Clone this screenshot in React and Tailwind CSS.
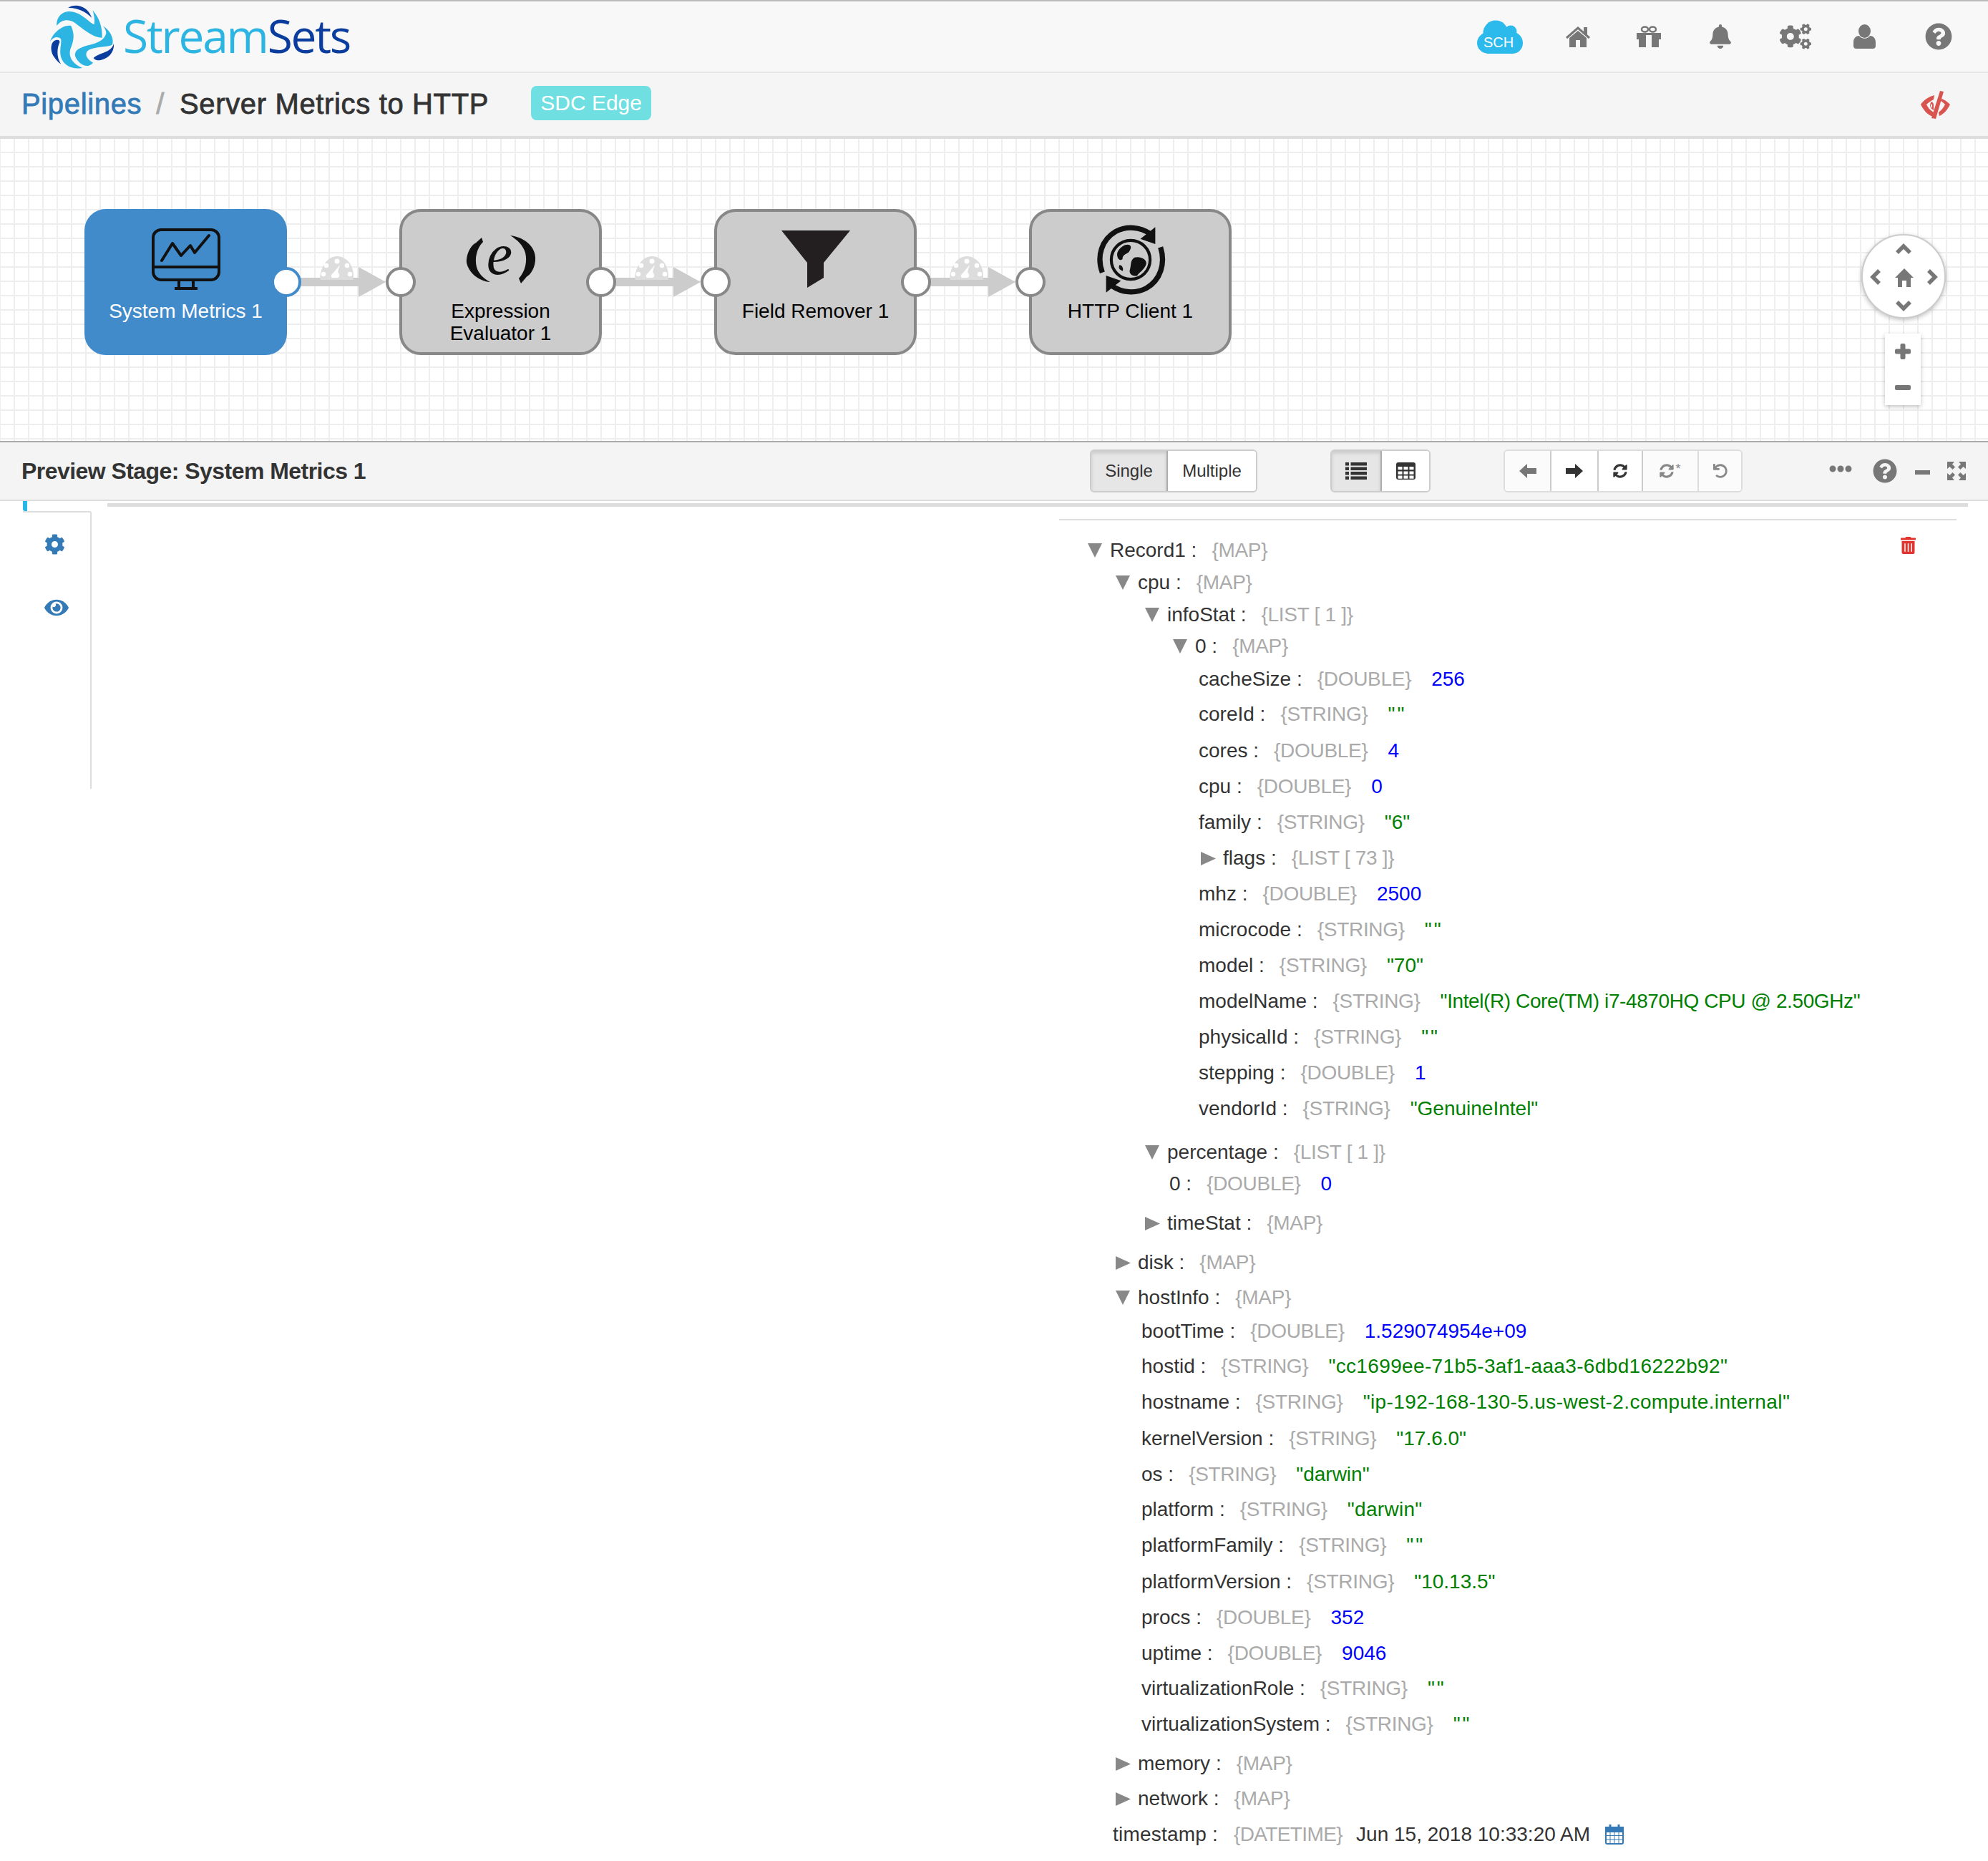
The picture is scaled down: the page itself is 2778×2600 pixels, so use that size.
import React from 'react';
import { FaBell, FaCogs, FaQuestionCircle, FaSyncAlt, FaUndo, FaEllipsisH, FaCog, FaEye, FaTrashAlt } from 'react-icons/fa';

const Logo = () => (
  <svg viewBox="0 0 330 300" className="w-[110px] h-[100px] shrink-0">
    <path fill="#0b3d9e" d="M105 30C130 12 185 15 205 72C180 45 140 28 105 30Z" />
    <path fill="#2cb5e2" d="M58 105C55 70 80 45 110 45C160 45 190 90 215 100C218 80 215 60 208 40C235 70 250 110 248 155C210 155 170 120 130 90C105 75 75 80 58 105Z" />
    <path fill="#2cb5e2" d="M30 172C40 135 85 98 118 105C128 130 135 155 118 195C105 225 115 260 165 282C120 290 85 270 75 235C68 205 80 175 75 160C60 145 40 155 30 172Z" />
    <path fill="#0b3d9e" d="M55 165C30 170 28 215 50 240C60 255 70 262 75 265C55 235 60 195 70 175C72 168 65 162 55 165Z" />
    <path fill="#2cb5e2" d="M250 105C285 125 300 165 290 185C270 195 230 190 195 205C175 215 175 240 210 260C190 282 165 275 145 250C125 225 135 205 165 195C200 180 255 180 265 135C265 125 258 112 250 105Z" />
    <path fill="#0b3d9e" d="M212 240C240 215 285 220 297 180C300 215 275 245 235 250C225 250 215 247 212 240Z" />
  </svg>
);

const Cloud = () => (
  <svg viewBox="0 0 64 47" className="w-[64px] h-[47px]">
    <g fill="#2cb9ec">
      <circle cx="26" cy="18" r="17.5" />
      <circle cx="47" cy="16" r="8.500" />
      <ellipse cx="50" cy="32" rx="14" ry="15" />
      <ellipse cx="16" cy="32" rx="16" ry="15" />
      <rect x="14" y="22" width="36" height="25" />
    </g>
    <text x="30" y="38" textAnchor="middle" fontSize="20" fill="#fff" fontFamily="Liberation Sans, sans-serif">SCH</text>
  </svg>
);

const HomeIcon = () => (
  <svg viewBox="0 0 34 29" className="w-[34px] h-[29px]" fill="#777">
    <rect x="25" y="1" width="5" height="10" />
    <path d="M1 16L17 2L33 16" fill="none" stroke="#777" strokeWidth="3" />
    <path d="M5 16L17 6L29 16V29H20V19H14V29H5Z" />
  </svg>
);

const GiftIcon = () => (
  <svg viewBox="0 0 34 30" className="w-[34px] h-[30px] ml-[65px]">
    <ellipse cx="11.500" cy="5" rx="4.500" ry="3.500" fill="none" stroke="#777" strokeWidth="2.500" />
    <ellipse cx="22.500" cy="5" rx="4.500" ry="3.500" fill="none" stroke="#777" strokeWidth="2.500" />
    <path fill="#777" d="M0 10H13V30H3V19H0ZM34 10H21V30H31V19H34Z" />
    <path fill="#777" d="M13 10H21V13H13Z" />
  </svg>
);

const UserIcon = () => (
  <svg viewBox="0 0 31 34" className="w-[31px] h-[34px] ml-[59px]" fill="#777">
    <ellipse cx="15.500" cy="9.500" rx="8.500" ry="9.500" />
    <path d="M0 30V25C0 19 4 16 8 16C11 21 20 21 23 16C27 16 31 19 31 25V30C31 33 29 34 27 34H4C2 34 0 33 0 30Z" />
  </svg>
);

const RedEye = () => (
  <svg viewBox="0 0 42 39" className="w-[42px] h-[39px]">
    <path fill="#d9534f" d="M20 6C12 8 5 13 1 19C5 27 10 33 18 36L19 30C14 27 11 23 9 19C12 16 15 14 19 12Z" />
    <path fill="#d9534f" d="M16 15C20 17 19 20 19 27C15 25 12 20 16 15Z" />
    <path fill="#fff" d="M16 18C17 20 17 21 17 24C15 22 14 20 16 18Z" />
    <path fill="#d9534f" d="M30 11C36 13 39 16 42 19C39 25 34 32 27 35L26 30C30 27 33 23 35 19C33 17 31 15 29 14Z" />
    <path fill="#d9534f" d="M28 0L33 1L22 39L16 38Z" />
  </svg>
);

const Connector = () => (
  <svg viewBox="0 0 160 60" className="absolute left-[calc(100%+5px)] top-[62px] w-[160px] h-[60px] pointer-events-none">
    <rect x="0" y="30" width="100" height="12" fill="#ccc" />
    <path d="M99 15L137 36L99 57Z" fill="#ccc" />
    <path d="M46 33C44 30 46 18 52 10C56 4 62 0 69 0C76 0 83 4 87 10C92 18 93 28 91 33Z" fill="#ddd" />
    <g fill="#fff">
      <circle cx="69" cy="7" r="3.500" />
      <circle cx="54" cy="13" r="3.200" />
      <circle cx="83" cy="13" r="3.200" />
      <circle cx="50" cy="25" r="3.200" />
      <circle cx="87" cy="25" r="3.200" />
      <path d="M73 12L70 22C73 25 73 29 70 30H62C60 28 61 25 64 23Z" />
    </g>
  </svg>
);

const Port = ({ side, blue }) => (
  <span className={`absolute top-[77px] w-[42px] h-[42px] rounded-full bg-white border-4 z-10 ${blue ? 'border-[#428bca]' : 'border-[#888888]'} ${side === 'left' ? 'left-[-23px]' : 'right-[-24px]'}`} />
);

const MonitorIcon = () => (
  <svg viewBox="0 0 96 86" className="w-[96px] h-[86px]" fill="none" stroke="#111" strokeWidth="4">
    <rect x="2" y="2" width="92" height="70" rx="11" />
    <path d="M2 54H94" />
    <path d="M14 45L29 21L41 38L54 24L60 34L80 10" strokeLinecap="round" strokeLinejoin="round" />
    <path d="M38 72V83M58 72V83M32 84H64" />
  </svg>
);

const ExprIcon = () => (
  <svg viewBox="0 0 98 68" className="w-[98px] h-[68px] overflow-visible">
    <path fill="#111" d="M22 3L24 9C15 18 12 32 15 44C17 52 24 60 34 65C18 64 4 52 1 38C0 28 6 14 14 10L10 14Z" />
    <path fill="#111" d="M62 0C80 2 96 14 97 30C98 44 90 56 84 58L88 54L77 67L74 60C83 50 86 36 83 24C80 14 72 6 62 0Z" />
    <text x="47" y="54" textAnchor="middle" fontSize="82" fontStyle="italic" fontFamily="Liberation Serif, serif" fill="#111">e</text>
  </svg>
);

const FunnelIcon = () => (
  <svg viewBox="0 0 96 80" className="w-[96px] h-[80px]">
    <path fill="#231f20" d="M0 0H96L59 45V66L36 80V45Z" />
  </svg>
);

const GlobeIcon = () => (
  <svg viewBox="0 0 94 94" className="w-[98px] h-[98px]" fill="none" stroke="#111">
    <path strokeWidth="7" d="M9 64C1 42 8 20 27 9C42 1 60 3 73 12" />
    <path fill="#111" stroke="none" d="M80 3L80 26L60 19Z" />
    <path strokeWidth="7" d="M87 30C94 52 87 74 68 85C53 93 35 91 22 82" />
    <path fill="#111" stroke="none" d="M14 91L14 68L34 75Z" />
    <circle cx="47" cy="47" r="26" strokeWidth="4" />
    <path fill="#111" stroke="none" d="M36 29C44 24 50 28 46 34C44 40 36 38 36 46C32 50 28 44 29 38C30 34 33 31 36 29ZM52 44C60 42 68 46 68 52C66 60 58 64 56 68C50 70 44 66 46 60C48 54 46 48 52 44ZM32 54C36 54 38 60 36 62C32 60 30 58 32 54Z" />
  </svg>
);

const nodes = [
  { label: ['System Metrics 1'], icon: <MonitorIcon />, iconCls: 'pt-[23px]', blue: true, inPort: false, outPort: true },
  { label: ['Expression', 'Evaluator 1'], icon: <ExprIcon />, iconCls: 'pt-[33px]', inPort: true, outPort: true },
  { label: ['Field Remover 1'], icon: <FunnelIcon />, iconCls: 'pt-[26px]', inPort: true, outPort: true },
  { label: ['HTTP Client 1'], icon: <GlobeIcon />, iconCls: 'pt-[18px]', inPort: true, outPort: false },
];

const Node = ({ n }) => (
  <div className={`relative w-[283px] h-[204px] rounded-[30px] border-4 ${n.blue ? 'bg-[#428bca] border-[#428bca] text-white' : 'bg-[#cccccc] border-[#888888] text-black'}`}>
    {n.inPort && <Port side="left" />}
    {n.outPort && <Port side="right" blue={n.blue} />}
    {n.outPort && <Connector />}
    <div className={`h-[122px] flex justify-center items-start ${n.iconCls}`}>{n.icon}</div>
    <div className="text-center text-[28px] leading-[31px] mt-[1px]">
      {n.label.map((l) => <div key={l}>{l}</div>)}
    </div>
  </div>
);

const Tri = ({ open }) => open
  ? <svg viewBox="0 0 20 20" className="w-[20px] h-[20px] shrink-0 mr-[11px]"><path d="M0 0H20L10 20Z" fill="#888" /></svg>
  : <svg viewBox="0 0 21 19" className="w-[21px] h-[19px] shrink-0 mr-[10px]"><path d="M0 0L21 9.500L0 19Z" fill="#888" /></svg>;

// [row classes, arrow (o/c/null), label, type, value, value classes]
const B = 'text-[#0000ff]';
const G = 'text-[#008000]';
const E = 'text-[#008000] tracking-[3px]';
const rows = [
  ['mt-0 pl-[40px]', 'o', 'Record1', '{MAP}'],
  ['mt-[5px] pl-[79px]', 'o', 'cpu', '{MAP}'],
  ['mt-[5px] pl-[120px]', 'o', 'infoStat', '{LIST [ 1 ]}'],
  ['mt-[4px] pl-[159px]', 'o', '0', '{MAP}'],
  ['mt-[6px] pl-[195px]', null, 'cacheSize', '{DOUBLE}', '256', B],
  ['mt-[9px] pl-[195px]', null, 'coreId', '{STRING}', '""', E],
  ['mt-[11px] pl-[195px]', null, 'cores', '{DOUBLE}', '4', B],
  ['mt-[10px] pl-[195px]', null, 'cpu', '{DOUBLE}', '0', B],
  ['mt-[10px] pl-[195px]', null, 'family', '{STRING}', '"6"', G],
  ['mt-[10px] pl-[198px]', 'c', 'flags', '{LIST [ 73 ]}'],
  ['mt-[10px] pl-[195px]', null, 'mhz', '{DOUBLE}', '2500', B],
  ['mt-[10px] pl-[195px]', null, 'microcode', '{STRING}', '""', E],
  ['mt-[10px] pl-[195px]', null, 'model', '{STRING}', '"70"', G],
  ['mt-[10px] pl-[195px]', null, 'modelName', '{STRING}', '"Intel(R) Core(TM) i7-4870HQ CPU @ 2.50GHz"', 'text-[#008000] tracking-[-0.4px]'],
  ['mt-[10px] pl-[195px]', null, 'physicalId', '{STRING}', '""', E],
  ['mt-[10px] pl-[195px]', null, 'stepping', '{DOUBLE}', '1', B],
  ['mt-[10px] pl-[195px]', null, 'vendorId', '{STRING}', '"GenuineIntel"', G],
  ['mt-[21px] pl-[120px]', 'o', 'percentage', '{LIST [ 1 ]}'],
  ['mt-[4px] pl-[154px]', null, '0', '{DOUBLE}', '0', B],
  ['mt-[15px] pl-[120px]', 'c', 'timeStat', '{MAP}'],
  ['mt-[15px] pl-[79px]', 'c', 'disk', '{MAP}'],
  ['mt-[9px] pl-[79px]', 'o', 'hostInfo', '{MAP}'],
  ['mt-[7px] pl-[115px]', null, 'bootTime', '{DOUBLE}', '1.529074954e+09', B],
  ['mt-[9px] pl-[115px]', null, 'hostid', '{STRING}', '"cc1699ee-71b5-3af1-aaa3-6dbd16222b92"', 'text-[#008000] tracking-[0.35px]'],
  ['mt-[10px] pl-[115px]', null, 'hostname', '{STRING}', '"ip-192-168-130-5.us-west-2.compute.internal"', 'text-[#008000] tracking-[0.4px]'],
  ['mt-[11px] pl-[115px]', null, 'kernelVersion', '{STRING}', '"17.6.0"', G],
  ['mt-[10px] pl-[115px]', null, 'os', '{STRING}', '"darwin"', G],
  ['mt-[9px] pl-[115px]', null, 'platform', '{STRING}', '"darwin"', 'text-[#008000] tracking-[0.3px]'],
  ['mt-[10px] pl-[115px]', null, 'platformFamily', '{STRING}', '""', E],
  ['mt-[11px] pl-[115px]', null, 'platformVersion', '{STRING}', '"10.13.5"', G],
  ['mt-[10px] pl-[115px]', null, 'procs', '{DOUBLE}', '352', B],
  ['mt-[10px] pl-[115px]', null, 'uptime', '{DOUBLE}', '9046', B],
  ['mt-[9px] pl-[115px]', null, 'virtualizationRole', '{STRING}', '""', E],
  ['mt-[10px] pl-[115px]', null, 'virtualizationSystem', '{STRING}', '""', E],
  ['mt-[15px] pl-[79px]', 'c', 'memory', '{MAP}'],
  ['mt-[9px] pl-[79px]', 'c', 'network', '{MAP}'],
];

const Row = ({ r }) => (
  <div className={`flex items-center h-[40px] text-[28px] whitespace-nowrap ${r[0]}`}>
    {r[1] && <Tri open={r[1] === 'o'} />}
    <span className="text-[#333333]">{r[2]} :</span>
    <span className="ml-[21px] text-[#aaaaaa] tracking-[-0.3px]">{r[3]}</span>
    {r[4] && <span className={`ml-[28px] ${r[5]}`}>{r[4]}</span>}
  </div>
);

const CalendarIcon = () => (
  <svg viewBox="0 0 26 28" className="w-[26px] h-[28px] ml-[21px]" fill="none" stroke="#337ab7">
    <rect x="1" y="4" width="24" height="23" rx="2" strokeWidth="2" />
    <rect x="1" y="4" width="24" height="6" fill="#337ab7" strokeWidth="2" />
    <path d="M7 0V7M19 0V7" strokeWidth="3" />
    <path d="M7 10V27M13 10V27M19 10V27M1 15.500H25M1 21H25" strokeWidth="1" />
  </svg>
);

const BtnCell = ({ cls, children }) => (
  <div className={`flex items-center justify-center h-full ${cls}`}>{children}</div>
);

const Chevron = ({ d, cls }) => (
  <svg viewBox="0 0 22 22" className={`absolute w-[22px] h-[22px] ${cls}`}>
    <path d={d} fill="none" stroke="#777" strokeWidth="5.500" />
  </svg>
);

const ListIcon = () => (
  <svg viewBox="0 0 30 24" className="w-[30px] h-[24px]" fill="#333">
    {[0, 6.5, 13, 19.5].map((y) => (
      <g key={y}>
        <rect x="0" y={y} width="5" height="4.500" />
        <rect x="7.500" y={y} width="22.500" height="4.500" />
      </g>
    ))}
  </svg>
);

const TableIcon = () => (
  <svg viewBox="0 0 27 24" className="w-[27px] h-[24px]">
    <rect width="27" height="24" rx="3" fill="#333" />
    <g fill="#fff">
      {[6, 12.5, 18.500].map((y) => [2.500, 10.500, 18.500].map((x) => (
        <rect key={`${x}-${y}`} x={x} y={y} width="6" height="4.200" />
      )))}
    </g>
  </svg>
);

const ArrowIcon = ({ dir, color }) => (
  <svg viewBox="0 0 24 20" className={`w-[24px] h-[20px] ${dir === 'r' ? 'rotate-180' : ''}`}>
    <path d="M11 0L0 10L11 20V14H24V6H11Z" fill={color} />
  </svg>
);

const ExpandIcon = () => (
  <svg viewBox="0 0 28 28" className="ml-[23px] w-[28px] h-[28px]" fill="#777">
    <path d="M1 1H11L8 4.500L12 8.500L8.500 12L4.500 8L1 11Z" />
    <path d="M27 1H17L20 4.500L16 8.500L19.500 12L23.500 8L27 11Z" />
    <path d="M1 27H11L8 23.500L12 19.500L8.500 16L4.500 20L1 17Z" />
    <path d="M27 27H17L20 23.500L16 19.500L19.500 16L23.500 20L27 17Z" />
  </svg>
);

export default function App() {
  return (
    <div className="relative w-[2778px] h-[2600px] bg-white overflow-hidden font-['Liberation_Sans',Arial,sans-serif]">
      {/* top nav */}
      <div className="h-[102px] border-t-2 border-b-2 border-t-[#bbbbbb] border-b-[#e7e7e7] bg-[#f8f8f8] flex items-center justify-between">
        <div className="flex items-center ml-[60px]">
          <Logo />
          <div className="ml-[2px] text-[64px] leading-none font-['Open_Sans',sans-serif] tracking-[-2.200px] mt-[-3px]">
            <span className="text-[#2cb5e2]">Stream</span><span className="text-[#0b3d9e]">Sets</span>
          </div>
        </div>
        <div className="flex items-center pr-[50px] text-[#777777]">
          <Cloud />
          <div className="ml-[60px]"><HomeIcon /></div>
          <GiftIcon />
          <FaBell className="ml-[68px] w-[30px] h-[34px]" />
          <FaCogs className="ml-[68px] w-[44px] h-[38px]" />
          <UserIcon />
          <FaQuestionCircle className="ml-[69px] w-[38px] h-[38px]" />
        </div>
      </div>

      {/* breadcrumb */}
      <div className="h-[92px] border-b-4 border-[#dddddd] bg-[#f5f5f5] flex items-center justify-between pl-[30px] pr-[53px]">
        <div className="flex items-center text-[40px] leading-none tracking-[0.65px] mt-[-2px] [-webkit-text-stroke:0.8px]">
          <span className="text-[#337ab7]">Pipelines</span>
          <span className="ml-[20px] text-[#aaaaaa]">/</span>
          <span className="ml-[21px] text-[#333333]">Server Metrics to HTTP</span>
          <span className="ml-[59px] w-[168px] h-[48px] rounded-[8px] bg-[#6fdfe1] text-white text-[30px] flex items-center justify-center mt-[-2px] tracking-normal [-webkit-text-stroke:0px]">SDC Edge</span>
        </div>
        <RedEye />
      </div>

      {/* canvas */}
      <div className="relative h-[422px] pt-[98px] pl-[118px] bg-white bg-[linear-gradient(#eeeeee_2px,transparent_2px),linear-gradient(90deg,#eeeeee_2px,transparent_2px)] bg-[size:20px_20px] bg-[position:-1px_-2px]">
        <div className="flex gap-[157px]">
          {nodes.map((n) => <Node key={n.label[0]} n={n} />)}
        </div>
        <div className="absolute left-[2601px] top-[133px] w-[118px] h-[118px] rounded-full bg-white border-2 border-[#cccccc] shadow-[0_2px_6px_rgba(0,0,0,0.25)]">
          <Chevron d="M2 16L11 7L20 16" cls="left-[46px] top-[8px]" />
          <Chevron d="M2 6L11 15L20 6" cls="left-[46px] top-[87px]" />
          <Chevron d="M16 2L7 11L16 20" cls="left-[7px] top-[47px]" />
          <Chevron d="M6 2L15 11L6 20" cls="left-[86px] top-[47px]" />
          <svg viewBox="0 0 26 26" className="absolute left-[45px] top-[46px] w-[26px] h-[26px]">
            <path fill="#777" d="M13 0L26 13H22V26H16V17H10V26H4V13H0Z" />
          </svg>
        </div>
        <div className="absolute left-[2634px] top-[272px] w-[50px] h-[100px] bg-white shadow-[0_2px_6px_rgba(0,0,0,0.25)] flex flex-col items-center">
          <svg viewBox="0 0 22 22" className="mt-[14px] w-[22px] h-[22px]" fill="#777">
            <rect x="0" y="7.500" width="22" height="7" rx="2" />
            <rect x="7.500" y="0" width="7" height="22" rx="2" />
          </svg>
          <svg viewBox="0 0 22 7" className="mt-[36px] w-[22px] h-[7px]" fill="#777">
            <rect width="22" height="7" rx="2" />
          </svg>
        </div>
      </div>

      {/* preview header */}
      <div className="h-[84px] border-t-2 border-b-2 border-t-[#aaaaaa] border-b-[#dddddd] bg-[#f4f4f4] flex items-center">
        <div className="w-[1493px] ml-[30px] text-[32px] font-bold text-[#333333] tracking-[-0.55px]">Preview Stage: System Metrics 1</div>
        <div className="w-[234px] h-[60px] flex border-2 border-[#cccccc] rounded-[6px] text-[24px] text-[#333333] overflow-hidden">
          <BtnCell cls="w-[107px] bg-[#e6e6e6] border-r-2 border-[#adadad] shadow-[inset_0_3px_5px_rgba(0,0,0,0.125)]">Single</BtnCell>
          <BtnCell cls="flex-1 bg-white">Multiple</BtnCell>
        </div>
        <div className="ml-[102px] w-[140px] h-[60px] flex border-2 border-[#cccccc] rounded-[6px] overflow-hidden">
          <BtnCell cls="w-[70px] bg-[#e6e6e6] border-r-2 border-[#adadad] shadow-[inset_0_3px_5px_rgba(0,0,0,0.125)]"><ListIcon /></BtnCell>
          <BtnCell cls="flex-1 bg-white"><TableIcon /></BtnCell>
        </div>
        <div className="ml-[102px] w-[334px] h-[60px] flex border-2 border-[#dddddd] rounded-[6px] bg-white overflow-hidden">
          <BtnCell cls="w-[65px] border-r-2 border-[#cccccc] bg-[#fbfbfb]"><ArrowIcon dir="l" color="#777" /></BtnCell>
          <BtnCell cls="w-[66px] border-r-2 border-[#cccccc]"><ArrowIcon dir="r" color="#333" /></BtnCell>
          <BtnCell cls="w-[62px] border-r-2 border-[#cccccc] text-[#333333]"><FaSyncAlt className="w-[20px] h-[22px]" /></BtnCell>
          <BtnCell cls="w-[78px] border-r-2 border-[#dddddd] bg-[#fbfbfb] text-[#888888]"><FaSyncAlt className="w-[20px] h-[22px]" /><span className="text-[18px] self-start mt-[12px] ml-[2px]">*</span></BtnCell>
          <BtnCell cls="flex-1 bg-[#fbfbfb] text-[#888888]"><FaUndo className="w-[20px] h-[20px]" /></BtnCell>
        </div>
        <div className="flex items-center text-[#777777] ml-[121px]">
          <FaEllipsisH className="w-[32px] h-[32px] mt-[-6px]" />
          <FaQuestionCircle className="ml-[29px] w-[34px] h-[34px]" />
          <svg viewBox="0 0 21 6" className="ml-[25px] w-[21px] h-[6px] mt-[4px]"><rect width="21" height="6" fill="#777" /></svg>
          <ExpandIcon />
        </div>
      </div>

      {/* body */}
      <div className="flex">
        <div className="ml-[32px] w-[96px] shrink-0">
          <div className="w-[6px] h-[14px] bg-[#29b6e8] rounded-bl-[3px]" />
          <div className="h-[388px] border-t-2 border-r-2 border-[#dddddd] rounded-tr-[3px] pl-[30px] pt-[30px] text-[#337ab7]">
            <FaCog className="w-[29px] h-[29px]" />
            <FaEye className="mt-[59px] w-[34px] h-[30px]" />
          </div>
        </div>
        <div className="ml-[22px] w-[2600px]">
          <div className="mt-[3px] h-[5px] bg-[#dddddd]" />
          <div className="relative ml-[1330px] mt-[17px] w-[1254px] border-t-2 border-[#dddddd] pt-[22px]">
            <FaTrashAlt className="absolute right-[57px] top-[23px] w-[21px] h-[24px] text-[#e0342f]" />
            {rows.map((r, i) => <Row key={i} r={r} />)}
            <div className="flex items-center h-[40px] mt-[10px] pl-[75px] text-[28px] whitespace-nowrap">
              <span className="text-[#333333] tracking-[0.2px]">timestamp :</span>
              <span className="ml-[22px] text-[#aaaaaa] tracking-[-0.6px]">{'{DATETIME}'}</span>
              <span className="ml-[19px] text-[#333333]">Jun 15, 2018 10:33:20 AM</span>
              <CalendarIcon />
            </div>
          </div>
        </div>
      </div>
    </div>
  );
}
